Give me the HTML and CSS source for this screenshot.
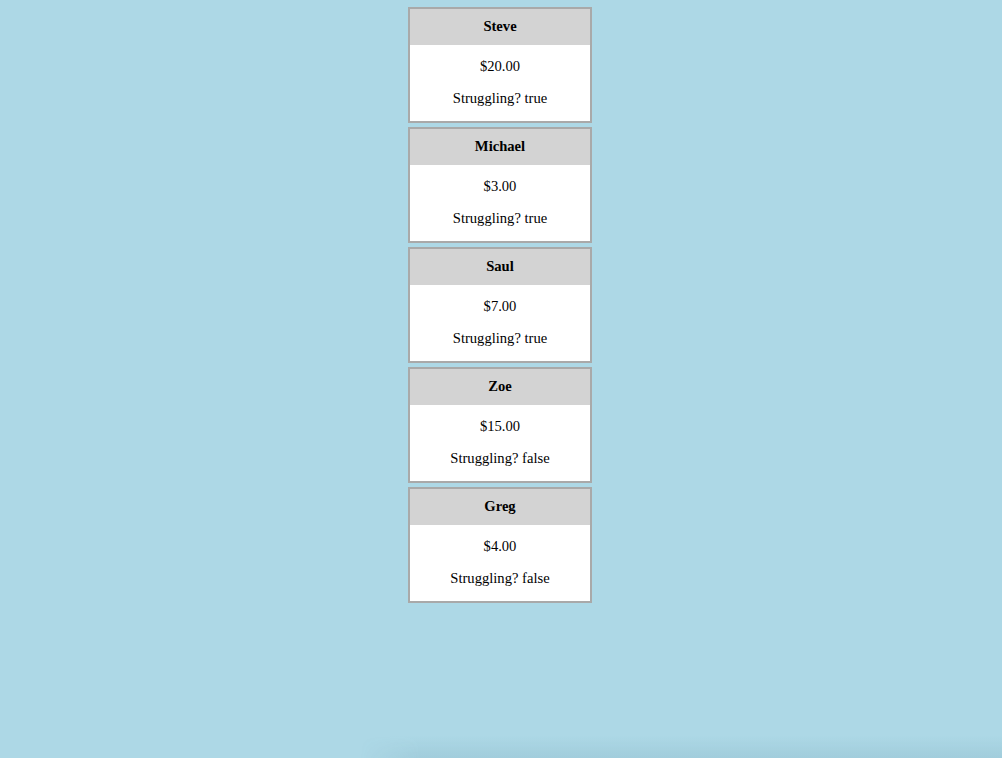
FILE: index.html
```html
<!DOCTYPE html>
<html>
<head>
<meta charset="utf-8">
<link rel="stylesheet" href="styles.css">
</head>
<body>
<div class="list">
  <div class="card">
    <div class="card-head">Steve</div>
    <div class="card-body"><div class="line">$20.00</div><div class="line">Struggling? true</div></div>
  </div>
  <div class="card">
    <div class="card-head">Michael</div>
    <div class="card-body"><div class="line">$3.00</div><div class="line">Struggling? true</div></div>
  </div>
  <div class="card">
    <div class="card-head">Saul</div>
    <div class="card-body"><div class="line">$7.00</div><div class="line">Struggling? true</div></div>
  </div>
  <div class="card">
    <div class="card-head">Zoe</div>
    <div class="card-body"><div class="line">$15.00</div><div class="line">Struggling? false</div></div>
  </div>
  <div class="card">
    <div class="card-head">Greg</div>
    <div class="card-body"><div class="line">$4.00</div><div class="line">Struggling? false</div></div>
  </div>
</div>
<div class="shade"></div>
</body>
</html>
```
FILE: styles.css
```css
html, body {
  margin: 0;
  height: 100%;
}
body {
  background: #add8e6;
  font-family: "Liberation Serif", "Times New Roman", serif;
  font-size: 14.6px;
  color: #000;
  padding: 7px 2px 0 0;
  box-sizing: border-box;
}
.list {
  display: flex;
  flex-direction: column;
  align-items: center;
  gap: 4px;
}
.card {
  width: 184px;
  box-sizing: border-box;
  border: 2px solid #a9a9a9;
  background: #fff;
}
.card-head {
  background: #d3d3d3;
  height: 36px;
  box-sizing: border-box;
  padding-bottom: 1px;
  line-height: 35px;
  text-align: center;
  font-weight: bold;
}
.card-body {
  display: flex;
  flex-direction: column;
  gap: 12px;
  padding: 11px 0 13px;
  text-align: center;
}
.line {
  height: 20px;
  line-height: 20px;
}
.shade {
  position: fixed;
  left: 360px;
  right: 0;
  bottom: 0;
  height: 22px;
  background: linear-gradient(to bottom, rgba(60, 110, 130, 0), rgba(60, 110, 130, 0.1));
  -webkit-mask-image: linear-gradient(to right, transparent, #000 60px);
  mask-image: linear-gradient(to right, transparent, #000 60px);
  pointer-events: none;
}
```
